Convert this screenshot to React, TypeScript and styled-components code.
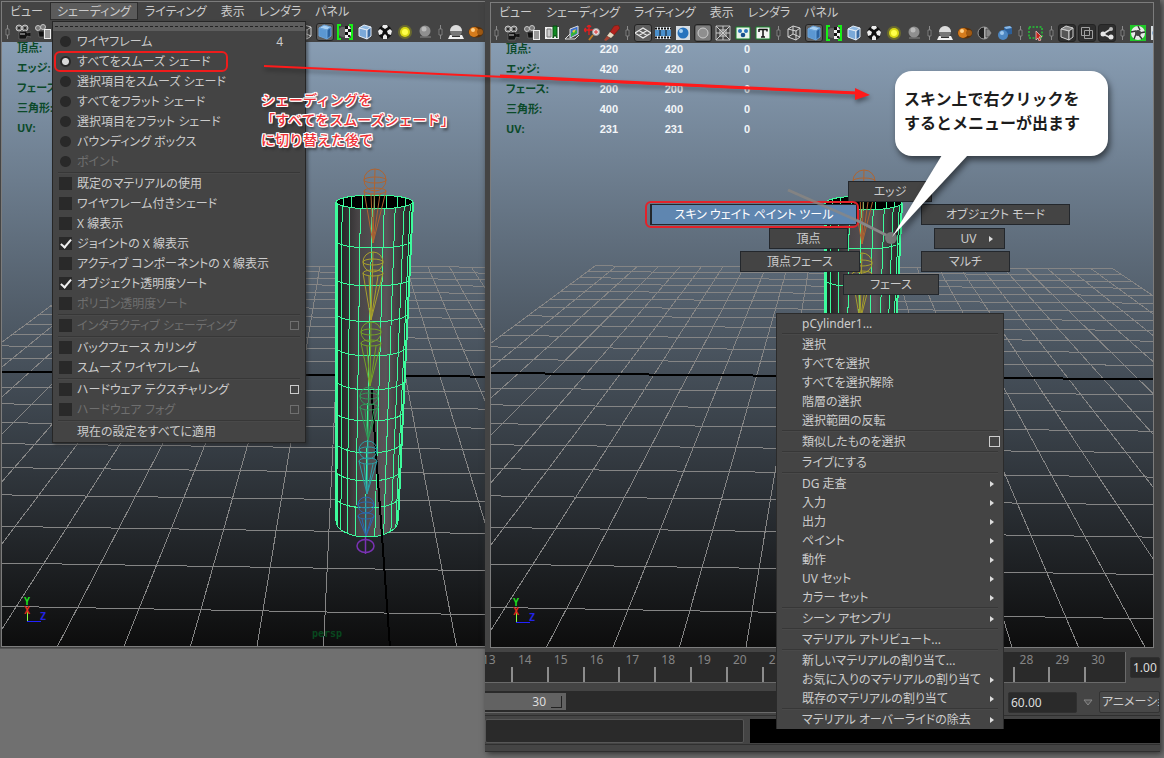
import React from "react";
import styled, { createGlobalStyle, css } from "styled-components";

const ui = `"Noto Sans", "Noto Sans CJK JP", sans-serif`;

const GlobalStyle = createGlobalStyle`
  *, *::before, *::after { box-sizing: border-box; }
  body {
    margin: 0;
    background: #707070;
    font-family: ${ui};
    font-size: 12px;
    line-height: 20px;
    font-feature-settings: "palt";
    color: #cccccc;
    overflow: hidden;
  }
  button, input, select { font: inherit; color: inherit; font-feature-settings: inherit; }
`;

/* ---------- windows ---------- */

const Desktop = styled.div`
  position: relative;
  display: flex;
  min-height: 100vh;
  padding: 0 4px 6px 0;
  background: #707070;
  overflow: hidden;
`;

const PanelWindow = styled.section`
  position: relative;
  display: flex;
  flex-direction: column;
  flex: 485 1 0;
  min-width: 0;
  margin-bottom: 103px;
  padding: 1px 0;
  background: #444444;
  border-bottom: 1px solid #555555;
`;

const MainWindow = styled.section`
  position: relative;
  display: flex;
  flex-direction: column;
  flex: 675 1 0;
  min-width: 0;
  padding-top: 2px;
  background: #444444;
  box-shadow: 2px 2px 6px #333333;
`;

const Panel = styled.div<{ $inset?: boolean }>`
  display: flex;
  flex-direction: column;
  flex: 1;
  min-width: 0;
  margin: ${(p) => (p.$inset ? "0 6px 0 5px" : "0 0 0 1px")};
  border: 1px solid #7c7c7c;
  border-right-width: ${(p) => (p.$inset ? "1px" : "0")};
`;

const MenuBar = styled.nav`
  position: relative;
  display: flex;
  height: 20px;
  padding-left: 1px;
  flex: none;
`;

const MenuTitle = styled.button<{ $open?: boolean }>`
  flex: none;
  height: 18px;
  margin: 0;
  padding: 0 6px;
  line-height: 18px;
  white-space: nowrap;
  border: 1px solid ${(p) => (p.$open ? "#2c2c2c" : "transparent")};
  background: ${(p) => (p.$open ? "#5b5b5b" : "transparent")};
`;

const Viewport = styled.div`
  position: relative;
  flex: 1;
  min-height: 0;
  overflow: hidden;
  background: linear-gradient(#889db3, #0d0d0d);
`;

/* ---------- toolbar ---------- */

const ToolRow = styled.div`
  display: flex;
  align-items: center;
  height: 20px;
  flex: none;
  overflow: hidden;
`;

const Tool = styled.button<{ $pressed?: boolean }>`
  flex: none;
  display: flex;
  align-items: center;
  justify-content: center;
  width: 18px;
  height: 18px;
  margin: 0 1px;
  padding: 0;
  border: 1px solid ${(p) => (p.$pressed ? "#242424" : "transparent")};
  border-radius: 3px;
  background: ${(p) => (p.$pressed ? "#5d5d5d" : "transparent")};
`;

const Handle = styled.span`
  flex: none;
  display: flex;
  justify-content: center;
  width: 11px;
`;

type IconName =
  | "camera" | "cameraList" | "bookmark" | "plane" | "zoom" | "brush"
  | "grid" | "film" | "ball" | "mask" | "wire" | "dots" | "type"
  | "cubeWire" | "cube" | "bracket" | "cubeEdge" | "checker" | "sun" | "sphere"
  | "white" | "orange" | "half" | "cubes" | "select" | "cubeDark" | "layers" | "share"
  | "aperture";

const Checks = () => (
  <>
    <circle cx="8" cy="8" r="7" fill="#111" />
    <path d="M6 1h4l1 2-3 2-3-2zM1 7l2-2 3 2-1 3-3 1zM15 7l-2-2-3 2 1 3 3 1zM6 12l2-2 2 2v3H6z" fill="#eee" />
  </>
);

const Cube = ({ top, left, right, edge }: { top: string; left: string; right: string; edge: string }) => (
  <g stroke={edge} strokeLinejoin="round">
    <path d="M2 4l5-3 7 2-4 3z" fill={top} />
    <path d="M2 4l8 2v9l-8-3z" fill={left} />
    <path d="M10 6l4-3v9l-4 3z" fill={right} />
  </g>
);

const art: Record<IconName, React.ReactNode> = {
  camera: (
    <>
      <circle cx="4" cy="4" r="3" fill="#777" stroke="#c8c8c8" /><circle cx="10" cy="4" r="3" fill="#777" stroke="#c8c8c8" />
      <circle cx="4" cy="4" r="1" fill="#111" /><circle cx="10" cy="4" r="1" fill="#111" />
      <path d="M4 8l7-1 1 2 4-1v5l-4-1-1 3-7 0z" fill="#121212" stroke="#777" strokeWidth=".6" />
      <path d="M5 10h5" stroke="#ccc" />
    </>
  ),
  cameraList: (
    <>
      <circle cx="3" cy="4" r="2.500" fill="#777" stroke="#c8c8c8" /><circle cx="8" cy="3" r="2.500" fill="#777" stroke="#c8c8c8" />
      <path d="M3 7h6v6H4z" fill="#121212" stroke="#777" strokeWidth=".6" />
      <path d="M9 5h7v10H9z" fill="#eee" /><path d="M10 7h5M10 9h5M10 11h5M10 13h5" stroke="#444" />
    </>
  ),
  bookmark: (
    <>
      <path d="M1 2h14v12H1z" fill="#f1f1f1" /><path d="M3 4h4v8H3z" fill="#ccc" stroke="#777" />
      <path d="M9 1h4v12l-2-3-2 3z" fill="#118a22" stroke="#064d10" />
    </>
  ),
  plane: (
    <>
      <path d="M6 4l8-3v8L6 13z" fill="#3b6ed0" stroke="#ddd" /><path d="M7 8l6-3v3l-6 4z" fill="#35b23c" />
      <path d="M8 6l4-2-2 4z" fill="#e6d335" /><path d="M6 9l-5 5h10l4-4" fill="none" stroke="#ddd" />
    </>
  ),
  zoom: (
    <>
      <path d="M5 0v10M0 5h10M3 2l2-2 2 2M2 3L0 5l2 2" stroke="#e21f1f" strokeWidth="1.400" fill="none" />
      <circle cx="12" cy="7" r="3.500" fill="#e9e3e3" stroke="#999" /><path d="M10 7h4M12 5v4" stroke="#d33" />
      <path d="M9 10l-4 5" stroke="#c27a22" strokeWidth="2" />
    </>
  ),
  brush: (
    <>
      <path d="M10 1l4-1 2 3-6 7-4-3z" fill="#b3221d" stroke="#621" strokeWidth=".6" />
      <path d="M6 7l4 3-3 3-4-2z" fill="#e8d9c0" /><path d="M3 11l3 2-4 3-2-1z" fill="#a43" />
    </>
  ),
  grid: (
    <path d="M0 8l8-5 8 5-8 5zM4 5.500l8 5M12 5.500l-8 5" fill="none" stroke="#eaeaea" strokeWidth="1.300" />
  ),
  film: (
    <>
      <path d="M0 2h16v12H0z" fill="#e9f1f7" /><path d="M0 5h16v6H0z" fill="#4a90cd" />
      <path d="M0 3.500h16M0 12.500h16" stroke="#111" strokeWidth="2" strokeDasharray="2 1" />
      <path d="M5 5v6M11 5v6" stroke="#111" />
    </>
  ),
  ball: (
    <>
      <path d="M1 1h14v14H1z" fill="#d7dde2" /><circle cx="8" cy="8" r="5.500" fill="#2773bd" /><circle cx="6" cy="6" r="2" fill="#a5cff0" />
    </>
  ),
  mask: (
    <>
      <path d="M1 1h14v14H1z" fill="#7c7c7c" /><circle cx="8" cy="8" r="5" fill="#8f8f8f" stroke="#ccc" />
    </>
  ),
  wire: (
    <>
      <path d="M1 1h14v14H1z" fill="#444" stroke="#bbb" /><path d="M1 1l14 14M15 1L1 15M8 1v14M1 8h14" stroke="#ccc" fill="none" /><path d="M5 5h6v6H5z" stroke="#ccc" fill="none" />
    </>
  ),
  dots: (
    <>
      <path d="M1 2h14v12H1z" fill="#e8f3ea" stroke="#178028" /><circle cx="5" cy="6" r="2" fill="#2a73bb" /><circle cx="11" cy="6" r="2" fill="#2a73bb" /><circle cx="8" cy="10" r="2.300" fill="#174f8b" />
    </>
  ),
  type: (
    <>
      <path d="M1 2h14v12H1z" fill="#f4f4f4" stroke="#178028" /><path d="M4 4.500h8v2M8 4v8M4 4v3M6 12h4" stroke="#111" strokeWidth="1.500" fill="none" />
    </>
  ),
  cubeWire: (
    <path d="M2 4l5-3 7 2-4 3zM2 4v8l8 3V6M14 3v9l-4 3M7 1v8l-5 3M7 9l7 3" fill="none" stroke="#d4d4d4" />
  ),
  cube: <Cube top="#a9d0f2" left="#5b97d2" right="#2b62a0" edge="#6aa3da" />,
  bracket: (
    <>
      <circle cx="6" cy="8" r="5" fill="#666" /><path d="M8 2h4l2 3v6l-2 3H8z" fill="#eee" /><path d="M8 2h3v3H8zM11 5h3v3h-3zM8 8h3v3H8zM11 11h2v2h-2z" fill="#111" />
      <path d="M4 1H1v14h3M12 1h3v14h-3" fill="none" stroke="#16f016" strokeWidth="2" />
    </>
  ),
  cubeEdge: <Cube top="#8fb8e0" left="#7ba9d8" right="#3a6ba3" edge="#e4edf7" />,
  checker: <Checks />,
  sun: (
    <>
      <circle cx="8" cy="8" r="7" fill="#8f8f1a" opacity=".5" /><circle cx="8" cy="8" r="5" fill="#d8d814" /><circle cx="8" cy="8" r="3" fill="#ffff4a" />
    </>
  ),
  sphere: (
    <>
      <path d="M3 12h11v2H3z" fill="#666" /><circle cx="8" cy="7" r="5.500" fill="#8f8f8f" /><circle cx="7" cy="5" r="2.500" fill="#bababa" />
    </>
  ),
  white: (
    <>
      <path d="M2 11h12l2 4H0z" fill="#f0f0f0" /><circle cx="8" cy="7" r="6" fill="#777" /><path d="M2 7a6 6 0 0112 0z" fill="#dcdcdc" /><path d="M4 12h8v1H4z" fill="#333" />
    </>
  ),
  orange: (
    <>
      <ellipse cx="8" cy="8" rx="7.500" ry="5.500" fill="#5d3006" /><circle cx="6" cy="8" r="5" fill="#d57b1c" /><circle cx="5" cy="6" r="2" fill="#ffd08a" /><circle cx="12" cy="8" r="3" fill="#a05a13" />
    </>
  ),
  half: (
    <>
      <circle cx="7" cy="8" r="6" fill="#222" stroke="#999" /><path d="M7 2a6 6 0 010 12z" fill="#aaa" /><path d="M9 4h3l3 4-3 4H9z" fill="#888" stroke="#333" strokeWidth=".6" />
    </>
  ),
  cubes: (
    <>
      <path d="M7 2l6-1 2 2v6l-6 1-2-2z" fill="#2c5f99" /><path d="M7 2l6-1 2 2-6 1z" fill="#8ab9e6" /><circle cx="6" cy="10" r="5" fill="#4d87c2" /><circle cx="5" cy="8" r="2" fill="#9cc6ec" />
    </>
  ),
  select: (
    <>
      <path d="M1 2h13v11H1z" fill="none" stroke="#24c436" strokeWidth="1.500" strokeDasharray="2 1.500" />
      <path d="M8 6l6 6h-3l2 3-2 1-1-3-2 2z" fill="#c5241c" stroke="#f4d0d0" strokeWidth=".7" />
    </>
  ),
  cubeDark: <Cube top="#888" left="#555" right="#333" edge="#d0d0d0" />,
  layers: <path d="M2.500 2.500h8v8h-8zM5.500 5.500h8v8h-8z" fill="none" stroke="#a0a0a0" />,
  share: (
    <>
      <path d="M4 9l8-5M4 9l8 4" stroke="#ddd" strokeWidth="1.800" /><circle cx="4" cy="9" r="2.500" fill="#e6e6e6" /><circle cx="12" cy="4" r="2" fill="#bbb" /><circle cx="12" cy="12" r="2.500" fill="#e6e6e6" />
    </>
  ),
  aperture: (
    <>
      <path d="M0 0h16v16H0z" fill="#20c828" /><circle cx="8" cy="8" r="7" fill="#e9e9e9" /><path d="M8 1l2 4M15 7l-5 1M12 14l-3-4M4 14l2-5M1 7l5-1" stroke="#333" strokeWidth="1.400" /><circle cx="8" cy="8" r="3" fill="#444" />
    </>
  ),
};

const groups: [IconName, string, boolean?][][] = [
  [["camera", "カメラ選択"], ["cameraList", "カメラ設定"], ["bookmark", "ブックマーク"], ["plane", "イメージプレーン"], ["zoom", "2D パン/ズーム"], ["brush", "グリース ペンシル"]],
  [["grid", "グリッド", true], ["film", "フィルム ゲート"], ["ball", "解像度ゲート"], ["mask", "ゲート マスク", true], ["wire", "フィールド チャート"], ["dots", "セーフ アクション"], ["type", "セーフ タイトル"]],
  [["cubeWire", "ワイヤフレーム表示"], ["cube", "スムーズ表示", true], ["bracket", "既定マテリアル"], ["cubeEdge", "エッジ表示"], ["checker", "テクスチャ"], ["sun", "ライト"], ["sphere", "シャドウ"]],
  [["white", "オクルージョン"], ["orange", "モーション ブラー"], ["half", "アンチエイリアス"], ["cubes", "被写界深度"]],
  [["select", "選択の分離"]],
  [["cubeDark", "X 線", true], ["layers", "X 線コンポーネント", true], ["share", "X 線ジョイント", true]],
  [["aperture", "露出"], ["ball", "ガンマ"]],
];

const DarkTool = styled(Tool)`
  background: #2e2e2e;
`;

const Grip = () => (
  <Handle aria-hidden>
    <svg width="5" height="16">
      <path d="M2.500 1v14" stroke="#8a8a8a" />
      <path d="M1 5h3v6H1z" fill="#3a3a3a" stroke="#8a8a8a" strokeWidth=".8" />
    </svg>
  </Handle>
);

const Toolbar = () => (
  <ToolRow role="toolbar">
    {groups.map((g, i) => (
      <React.Fragment key={i}>
        <Grip />
        {g.map(([name, label, pressed]) => {
          const T = i === 5 ? DarkTool : Tool;
          return (
            <T key={name} $pressed={pressed} aria-label={label}>
              <svg width="16" height="16" viewBox="0 0 16 16">{art[name]}</svg>
            </T>
          );
        })}
      </React.Fragment>
    ))}
  </ToolRow>
);

/* ---------- 3D scene ---------- */

const SceneSvg = styled.svg`
  position: absolute;
  inset: 0;
  width: 100%;
  height: 100%;
`;

const project = (n: number, k: number): [number, number] => {
  const depth = 20.05 - k - 0.0228 * n;
  const dy = 5846 / depth;
  return [350 + (0.0712 + 0.1183 * n) * dy, 84 + dy];
};

const line = (a: [number, number], b: [number, number]) =>
  `M${a[0].toFixed(1)} ${a[1].toFixed(1)}L${b[0].toFixed(1)} ${b[1].toFixed(1)}`;

const steps = Array.from({ length: 25 }, (_, i) => i - 12);
const gridPath = steps
  .filter((s) => s !== 0)
  .map((s) => line(project(s, -12), project(s, 12)) + line(project(-12, s), project(12, s)))
  .join("");
const axisX = line(project(-12, 0), project(12, 0));

/* each ring: height of its side points, height of its front point */
const rings: [number, number][] = [
  [202, 209], [241, 248], [279, 286], [313, 322], [347, 356], [380, 390],
  [412, 421], [442, 453], [470, 481], [497, 508], [521, 537],
];
const ringBox = (y: number) => {
  const right = 413 - ((y - 202) / 319) * 15;
  return { cx: (336 + right) / 2, rx: (right - 336) / 2 };
};
const ringPath = rings
  .slice(1)
  .map(([y, f]) => {
    const { cx, rx } = ringBox(y);
    return `M${cx - rx} ${y}A${rx} ${f - y} 0 0 0 ${cx + rx} ${y}`;
  })
  .join("");
const wallPath = Array.from({ length: 11 }, (_, i) => {
  const a = (i * 18 * Math.PI) / 180 + 0.06;
  return rings
    .map(([y, f], j) => {
      const { cx, rx } = ringBox(y);
      return `${j ? "L" : "M"}${(cx + rx * Math.cos(a)).toFixed(1)} ${(y + (f - y) * Math.abs(Math.sin(a))).toFixed(1)}`;
    })
    .join("");
}).join("");
const rimPath = Array.from({ length: 7 }, (_, i) => {
  const a = ((i + 2) * 18 * Math.PI) / 180;
  const x = 374.5 + 38.5 * Math.cos(a);
  return `M${x} ${202 - 7 * Math.sin(a)}V${202 + 7 * Math.sin(a)}`;
}).join("");
const bodyPath = "M336 202A38.500 7 0 0 0 413 202L398 521A31 16 0 0 1 336 521Z";

const joints = [
  { x: 375, y: 180, r: 11, tip: [373, 243], c: "#b06430" },
  { x: 373, y: 262, r: 10, tip: [371, 320], c: "#a8a02c" },
  { x: 371, y: 332, r: 10, tip: [370, 386], c: "#74a326" },
  { x: 369, y: 396, r: 9, tip: [368, 440], c: "#2f9a58" },
  { x: 368, y: 450, r: 9, tip: [367, 494], c: "#2aa0a8" },
  { x: 366, y: 505, r: 8, tip: [366, 536], c: "#2a68ae" },
];

const Scene = ({ id }: { id: string }) => (
  <SceneSvg viewBox="2 42 662 604" preserveAspectRatio="xMinYMin slice" aria-label="persp ビュー" role="img">
    <defs>
      <linearGradient id={id}>
        <stop offset="0" stopColor="#1b1c1c" />
        <stop offset=".3" stopColor="#4a4648" />
        <stop offset=".65" stopColor="#595458" />
        <stop offset="1" stopColor="#222323" />
      </linearGradient>
    </defs>
    <g fill="none" shapeRendering="crispEdges">
      <path d={gridPath} stroke="#858585" />
      <path d={axisX} stroke="#000" strokeWidth="2" />
      <path d={bodyPath} fill={`url(#${id})`} />
      <ellipse cx="374.500" cy="202" rx="38.500" ry="7" fill="#000" />
      <g stroke="#3dfb9c">
        <ellipse cx="374.500" cy="202" rx="38.500" ry="7" />
        <path d={rimPath + ringPath + wallPath} />
        <path d="M336 202V521M413 202L398 521" strokeWidth="2" />
      </g>
      <path d={line([371.5, 390], project(0, 12))} stroke="#000" strokeWidth="2" />
    </g>
    {joints.map((j) => (
      <g key={j.c} fill="none" stroke={j.c}>
        <circle cx={j.x} cy={j.y} r={j.r} />
        <ellipse cx={j.x} cy={j.y} rx={j.r} ry="3" />
        <ellipse cx={j.x} cy={j.y + 11} rx={j.r} ry="3" />
        <path d={`M${j.x} ${j.y - j.r}L${j.tip[0]} ${j.tip[1]}M${j.x - j.r} ${j.y + 11}L${j.tip[0]} ${j.tip[1]}L${j.x + j.r} ${j.y + 11}M${j.x - 4} ${j.y + 14}L${j.tip[0]} ${j.tip[1]}L${j.x + 5} ${j.y + 14}`} />
      </g>
    ))}
    <g fill="none" stroke="#7a32b4" strokeWidth="1.500">
      <ellipse cx="365.500" cy="546" rx="8.500" ry="6.500" />
      <path d="M365.500 537v17" />
    </g>
    <path d="M27.500 608v13" stroke="#8f4" />
    <path d="M27 621.500h14" stroke="#22f" />
    <g fontFamily="DejaVu Sans Mono" fontWeight="700" fontSize="10">
      <text x="24" y="605" fill="#1ee01e">Y</text>
      <text x="24" y="614" fill="#e02a1a">X</text>
      <text x="40" y="620" fill="#2323e6">Z</text>
      <text x="312" y="637" fill="#08481f">persp</text>
    </g>
  </SceneSvg>
);

/* ---------- heads-up statistics ---------- */

const Stats = styled.table`
  position: absolute;
  top: -4px;
  left: 15px;
  border-collapse: collapse;
  line-height: 20px;
  font-weight: 700;
  font-size: 11px;
  th, td { padding: 0; height: 20px; }
  th { width: 47px; text-align: left; color: #0b4a2a; white-space: nowrap; }
  td {
    width: 65px;
    text-align: right;
    color: #f2f5f8;
    font-family: "Liberation Sans", sans-serif;
  }
  td:last-child { width: 67px; }
`;

const statRows: [string, string, string, string][] = [
  ["頂点:", "220", "220", "0"],
  ["エッジ:", "420", "420", "0"],
  ["フェース:", "200", "200", "0"],
  ["三角形:", "400", "400", "0"],
  ["UV:", "231", "231", "0"],
];

const Hud = () => (
  <Stats>
    <tbody>
      {statRows.map(([name, ...vals]) => (
        <tr key={name}>
          <th scope="row">{name}</th>
          {vals.map((v, i) => <td key={i}>{v}</td>)}
        </tr>
      ))}
    </tbody>
  </Stats>
);

/* ---------- menus ---------- */

const DropMenu = styled.form`
  position: absolute;
  z-index: 2;
  top: 19px;
  left: 50px;
  width: 254px;
  background: #444444;
  border: 1px solid #262626;
  box-shadow: 2px 2px 3px #22222288;
`;

const TearOff = styled.div`
  height: 9px;
  background: #5d5d5d;
  padding-top: 4px;
  margin-bottom: 1px;
  &::before { content: ""; display: block; border-top: 1px dashed #222222; margin: 0 2px; }
`;

const Rule = styled.hr`
  height: 2px;
  margin: 0 5px;
  border: 0;
  border-top: 1px solid #373737;
  background: #494949;
`;

const Choice = styled.label<{ $off?: boolean; $marked?: boolean }>`
  position: relative;
  display: flex;
  align-items: center;
  gap: 5px;
  height: 20px;
  padding: 0 6px 1px;
  white-space: nowrap;
  color: ${(p) => (p.$off ? "#6f6f6f" : "#cccccc")};
  ${(p) =>
    p.$marked &&
    css`
      &::after {
        content: "";
        position: absolute;
        top: -1px;
        left: 1px;
        width: 174px;
        height: 21px;
        border: 2px solid #ee1c1c;
        border-radius: 6px;
      }
    `}
`;

const Radio = styled.input`
  appearance: none;
  width: 13px;
  height: 13px;
  margin: 0;
  background: radial-gradient(circle, #292929 5px, transparent 6px);
  &:checked { background: radial-gradient(circle, #d8d8d8 3px, #292929 4px, #292929 5px, transparent 6px); }
`;

const Tick = styled.input`
  appearance: none;
  position: relative;
  width: 13px;
  height: 13px;
  margin: 0;
  background: #292929;
  &:checked::after {
    content: "";
    position: absolute;
    left: 4px;
    top: 0;
    width: 6px;
    height: 11px;
    border: solid #eeeeee;
    border-width: 0 2px 2px 0;
    transform: rotate(40deg);
  }
`;

const Spacer = styled.span`
  flex: 1;
`;

const Shortcut = styled.kbd`
  font: inherit;
  margin-right: 16px;
`;

const OptionBox = styled.button<{ $size?: number }>`
  width: ${(p) => p.$size ?? 9}px;
  height: ${(p) => p.$size ?? 9}px;
  padding: 0;
  background: none;
  border: 1px solid currentColor;
`;

const ApplyAll = styled.button`
  display: block;
  width: 100%;
  height: 20px;
  padding: 0 0 0 24px;
  border: 0;
  background: none;
  text-align: left;
  line-height: 20px;
`;

const radios = ["ワイヤフレーム", "すべてをスムーズ シェード", "選択項目をスムーズ シェード", "すべてをフラット シェード", "選択項目をフラット シェード", "バウンディング ボックス", "ポイント"];

type Check = { t: string; on?: boolean; off?: boolean; box?: boolean };
const checkGroups: Check[][] = [
  [
    { t: "既定のマテリアルの使用" }, { t: "ワイヤフレーム付きシェード" }, { t: "X 線表示" },
    { t: "ジョイントの X 線表示", on: true }, { t: "アクティブ コンポーネントの X 線表示" },
    { t: "オブジェクト透明度ソート", on: true }, { t: "ポリゴン透明度ソート", off: true },
  ],
  [{ t: "インタラクティブ シェーディング", off: true, box: true }],
  [{ t: "バックフェース カリング" }, { t: "スムーズ ワイヤフレーム" }],
  [{ t: "ハードウェア テクスチャリング", box: true }, { t: "ハードウェア フォグ", off: true, box: true }],
];

const ShadingMenu = () => (
  <DropMenu>
    <TearOff />
    {radios.map((t, i) => (
      <Choice key={t} $off={i === 6} $marked={i === 1}>
        <Radio type="radio" name="shading" defaultChecked={i === 1} disabled={i === 6} />
        {t}
        {i === 0 && (<><Spacer /><Shortcut>4</Shortcut></>)}
      </Choice>
    ))}
    {checkGroups.map((g, i) => (
      <React.Fragment key={i}>
        <Rule />
        {g.map((c) => (
          <Choice key={c.t} $off={c.off}>
            <Tick type="checkbox" defaultChecked={c.on} disabled={c.off} />
            {c.t}
            {c.box && (<><Spacer /><OptionBox type="button" aria-label={`${c.t} オプション`} /></>)}
          </Choice>
        ))}
      </React.Fragment>
    ))}
    <Rule />
    <ApplyAll type="button">現在の設定をすべてに適用</ApplyAll>
  </DropMenu>
);

const ContextBox = styled.div`
  position: absolute;
  z-index: 2;
  top: 313px;
  left: 291px;
  width: 228px;
  background: #444444;
  border: 1px solid #2b2b2b;
  border-bottom: 0;
`;

const ContextRow = styled.div`
  display: flex;
  align-items: center;
  height: 19px;
  padding: 0 3px 0 25px;
`;

const ContextItem = styled.button`
  display: flex;
  flex: 1;
  align-items: center;
  justify-content: space-between;
  height: 19px;
  padding: 0 6px 0 0;
  border: 0;
  background: none;
  line-height: 19px;
  white-space: nowrap;
`;

const Arrow = () => (
  <svg width="4" height="6" aria-hidden><path d="M0 0l4 3-4 3z" fill="#dddddd" /></svg>
);

const contextGroups: string[][] = [
  ["pCylinder1..."],
  ["選択", "すべてを選択", "すべてを選択解除", "階層の選択", "選択範囲の反転"],
  ["類似したものを選択#"],
  ["ライブにする"],
  ["DG 走査>", "入力>", "出力>", "ペイント>", "動作>", "UV セット>", "カラー セット>"],
  ["シーン アセンブリ>"],
  ["マテリアル アトリビュート..."],
  ["新しいマテリアルの割り当て...", "お気に入りのマテリアルの割り当て>", "既存のマテリアルの割り当て>"],
  ["マテリアル オーバーライドの除去>"],
];

const ContextMenu = () => (
  <ContextBox>
    {contextGroups.map((g, i) => (
      <React.Fragment key={i}>
        {i > 0 && <Rule />}
        {g.map((t) => (
          <ContextRow key={t}>
            <ContextItem>
              {t.replace(/[>#]$/, "")}
              {t.endsWith(">") && <Arrow />}
            </ContextItem>
            {t.endsWith("#") && <OptionBox $size={11} aria-label="選択オプション" />}
          </ContextRow>
        ))}
      </React.Fragment>
    ))}
  </ContextBox>
);

/* ---------- marking menu: items radiate from the pointer ---------- */

const Marking = styled.div`
  position: absolute;
  z-index: 1;
  top: 238px;
  left: 405px;
  width: 0;
  height: 0;
`;

const MarkItem = styled.button<{ $x: number; $y: number; $w: number; $hot?: boolean; $sub?: boolean }>`
  position: absolute;
  left: ${(p) => p.$x}px;
  top: ${(p) => p.$y}px;
  width: ${(p) => p.$w}px;
  height: 21px;
  padding: 0 0 0 ${(p) => (p.$sub ? 15 : 0)}px;
  display: flex;
  align-items: center;
  justify-content: center;
  gap: 13px;
  line-height: 19px;
  white-space: nowrap;
  border: 1px solid #23272c;
  color: ${(p) => (p.$hot ? "#ffffff" : "#cccccc")};
  background: ${(p) => (p.$hot ? "#5f86b0" : "#444444")};
  ${(p) =>
    p.$hot &&
    css`
      border-width: 1px 1px 1px 2px;
      &::after {
        content: "";
        position: absolute;
        inset: -4px -3px -4px -7px;
        border: 2px solid #e3222a;
        border-radius: 6px;
      }
    `}
`;

const Stroke = styled.svg`
  position: absolute;
  left: -110px;
  top: -60px;
  pointer-events: none;
`;

const MarkingMenu = () => (
  <Marking>
    <MarkItem $x={-42} $y={-57} $w={84}>エッジ</MarkItem>
    <MarkItem $x={31} $y={-34} $w={149}>オブジェクト モード</MarkItem>
    <MarkItem $x={44} $y={-10} $w={71} $sub>UV<Arrow /></MarkItem>
    <MarkItem $x={31} $y={13} $w={89}>マルチ</MarkItem>
    <MarkItem $x={-47} $y={36} $w={96}>フェース</MarkItem>
    <MarkItem $x={-150} $y={13} $w={120}>頂点フェース</MarkItem>
    <MarkItem $x={-121} $y={-10} $w={79}>頂点</MarkItem>
    <MarkItem $x={-240} $y={-34} $w={207} $hot>スキン ウェイト ペイント ツール</MarkItem>
    <Stroke width="130" height="80" aria-hidden>
      <path d="M8 12L76 42" stroke="#8e8780" strokeOpacity=".7" strokeWidth="3" />
      <path d="M76 42L110 59" stroke="#878787" strokeWidth="3" />
      <circle cx="111" cy="60" r="6" fill="#777777" />
    </Stroke>
  </Marking>
);

/* ---------- time controls ---------- */

const TimeRow = styled.div`
  display: flex;
  align-items: center;
  height: 31px;
  margin-top: 4px;
  flex: none;
  overflow: hidden;
`;

const Timeline = styled.ol`
  display: flex;
  flex: 1;
  min-width: 0;
  height: 31px;
  margin: 0;
  padding: 0 5px 0 0;
  list-style: none;
  overflow: hidden;
  background: #2a2a2a;
  border-bottom: 1px solid #6a6a6a;
  border-right: 1px solid #6a6a6a;
  color: #858585;
`;

const Frame = styled.li<{ $first?: boolean }>`
  flex: ${(p) => (p.$first ? "0 0 26px" : "1 1 0")};
  min-width: 0;
  padding-left: ${(p) => (p.$first ? "0" : "7px")};
  text-indent: ${(p) => (p.$first ? "-3px" : "0")};
  line-height: 15px;
  background: ${(p) => (p.$first ? "none" : "linear-gradient(#8c8c8c, #8c8c8c) 0 15px / 2px 15px no-repeat")};
`;

const NumberField = styled.input<{ $w: number }>`
  flex: none;
  width: ${(p) => p.$w}px;
  height: 21px;
  padding: 0 1px 0 2px;
  border: 1px solid #303030;
  border-radius: 2px;
  background: #2a2a2a;
  color: #dddddd;
`;

const CurrentTime = styled(NumberField)`
  margin-left: 4px;
`;

const RangeRow = styled.div`
  display: flex;
  align-items: center;
  height: 22px;
  margin-top: 8px;
  flex: none;
  overflow: hidden;
`;

const RangeTrack = styled.div`
  display: flex;
  align-items: center;
  flex: 1;
  min-width: 0;
  height: 22px;
  margin-right: 6px;
  background: #2a2a2a;
  border-bottom: 1px solid #6a6a6a;
`;

const RangeBar = styled.div`
  display: flex;
  align-items: center;
  justify-content: flex-end;
  gap: 5px;
  width: 81px;
  height: 17px;
  padding-right: 4px;
  background: #626262;
  color: #dddddd;
`;

const Corner = styled.span`
  width: 11px;
  height: 12px;
  border: solid #222222;
  border-width: 0 1px 1px 0;
`;

const SetButton = styled.button<{ $plain?: boolean }>`
  flex: none;
  display: flex;
  align-items: center;
  justify-content: ${(p) => (p.$plain ? "center" : "flex-start")};
  width: ${(p) => (p.$plain ? 20 : 61)}px;
  height: 22px;
  padding: 0 0 0 ${(p) => (p.$plain ? 0 : 2)}px;
  margin-left: 1px;
  white-space: nowrap;
  overflow: hidden;
  border: ${(p) => (p.$plain ? "0" : "1px solid #333333")};
  border-radius: 2px;
  background: ${(p) => (p.$plain ? "none" : "#484848")};
`;

const CommandRow = styled.div`
  display: flex;
  align-items: center;
  height: 30px;
  margin-top: 2px;
  padding: 3px 0 2px;
  border-top: 1px solid #2f2f2f;
  border-bottom: 1px solid #303030;
  flex: none;
`;

const CommandInput = styled.input`
  flex: 258 1 0;
  min-width: 0;
  height: 24px;
  margin-right: 6px;
  padding: 0;
  border: 1px solid #575757;
  border-radius: 2px;
  background: #2a2a2a;
`;

const CommandOutput = styled.output`
  flex: 411 1 0;
  min-width: 0;
  height: 24px;
  background: #000000;
`;

const StatusStrip = styled.div`
  height: 7px;
  flex: none;
  border-bottom: 1px solid #2f2f2f;
`;

const frames = Array.from({ length: 18 }, (_, i) => 13 + i);

const TimeControls = () => (
  <>
    <TimeRow>
      <Timeline>
        {frames.map((f, i) => <Frame key={f} $first={i === 0}>{f}</Frame>)}
      </Timeline>
      <CurrentTime $w={30} defaultValue="1.00" aria-label="現在の時間" />
    </TimeRow>
    <RangeRow>
      <RangeTrack><RangeBar>30<Corner /></RangeBar></RangeTrack>
      <NumberField $w={69} defaultValue="60.00" aria-label="終了時間" />
      <SetButton $plain aria-label="アニメーション メニュー">
        <svg width="10" height="7"><path d="M1 1h8L5 6z" fill="#555" stroke="#888" /></svg>
      </SetButton>
      <SetButton>アニメーション</SetButton>
    </RangeRow>
    <CommandRow>
      <CommandInput aria-label="コマンド" />
      <CommandOutput />
    </CommandRow>
    <StatusStrip />
  </>
);

/* ---------- annotations ---------- */

const ArrowLayer = styled.svg`
  position: absolute;
  z-index: 3;
  left: 260px;
  top: 55px;
  pointer-events: none;
  filter: drop-shadow(1px 3px 2px #00000066);
`;

const Note = styled.p`
  position: absolute;
  z-index: 3;
  left: 261px;
  top: 89px;
  margin: 0;
  font-family: "Noto Sans CJK JP", sans-serif;
  font-feature-settings: normal;
  font-weight: 500;
  font-size: 14px;
  line-height: 20px;
  color: #ee3338;
  white-space: nowrap;
  text-shadow: 1px 0 #fff, -1px 0 #fff, 0 1px #fff, 0 -1px #fff, 1px 1px #fff, -1px -1px #fff, 1px -1px #fff, -1px 1px #fff, 2px 3px 3px #222;
`;

const Bubble = styled.div`
  position: absolute;
  z-index: 4;
  left: 895px;
  top: 71px;
  padding: 15px 28px 22px 9px;
  border-radius: 17px;
  background: #ffffff;
  filter: drop-shadow(2px 4px 3px #00000088);
`;

const BubbleText = styled.p`
  margin: 0;
  font-family: "Noto Sans CJK JP", sans-serif;
  font-feature-settings: normal;
  font-weight: 700;
  font-size: 16px;
  line-height: 24px;
  color: #1c1c1c;
  white-space: nowrap;
`;

const Tail = styled.svg`
  position: absolute;
  left: -5px;
  top: 84px;
`;

const titles = ["ビュー", "シェーディング", "ライティング", "表示", "レンダラ", "パネル"];

const Titles = ({ open }: { open?: string }) => (
  <>{titles.map((t) => <MenuTitle key={t} $open={t === open}>{t}</MenuTitle>)}</>
);

export default function App() {
  return (
    <>
      <GlobalStyle />
      <Desktop>
        <PanelWindow>
          <Panel>
            <MenuBar>
              <Titles open="シェーディング" />
              <ShadingMenu />
            </MenuBar>
            <Toolbar />
            <Viewport>
              <Scene id="bodyLeft" />
              <Hud />
            </Viewport>
          </Panel>
        </PanelWindow>
        <MainWindow>
          <Panel $inset>
            <MenuBar><Titles /></MenuBar>
            <Toolbar />
            <Viewport>
              <Scene id="bodyRight" />
              <Hud />
            </Viewport>
          </Panel>
          <TimeControls />
          <MarkingMenu />
          <ContextMenu />
        </MainWindow>
        <ArrowLayer width="620" height="60" aria-hidden>
          <path d="M4 11L596 38" stroke="#ff1a1a" strokeWidth="2" />
          <path d="M240 21L596 38" stroke="#ff1a1a" strokeWidth="3" />
          <path d="M610 40L595 33v12z" fill="#ff1a1a" />
        </ArrowLayer>
        <Note>シェーディングを<br />「すべてをスムーズシェード」<br />に切り替えた後で</Note>
        <Bubble>
          <BubbleText>スキン上で右クリックを<br />するとメニューが出ます</BubbleText>
          <Tail width="85" height="84" aria-hidden><path d="M52 0L2 82L78 0z" fill="#ffffff" /></Tail>
        </Bubble>
      </Desktop>
    </>
  );
}
